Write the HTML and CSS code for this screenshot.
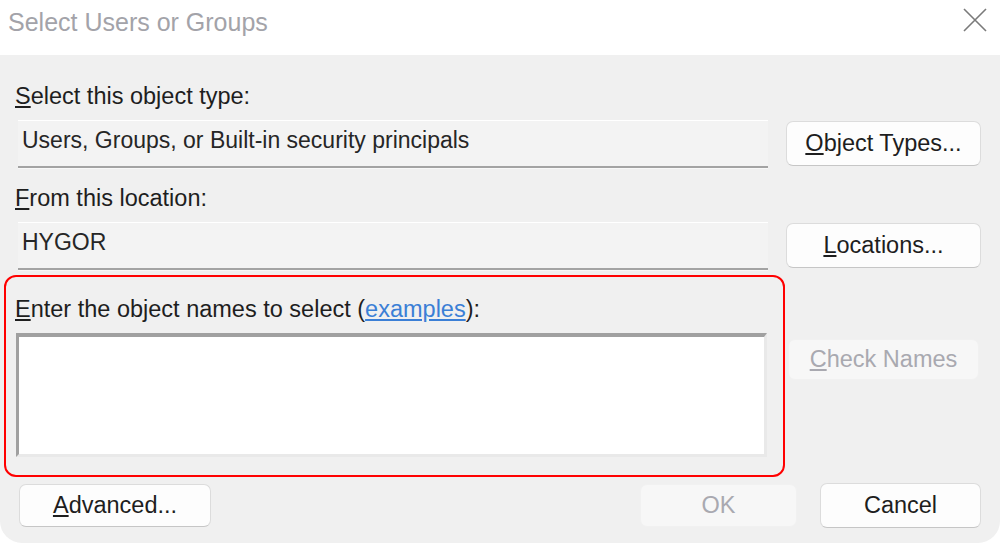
FILE: index.html
```html
<!DOCTYPE html>
<html lang="en">
  <head>
    <meta charset="UTF-8" />
    <title>Select Users or Groups</title>
    <link rel="stylesheet" href="styles.css">
  </head>
  <body>
    <div class="dialog">
      <!-- title bar -->
      <div class="titlebar">
        <span class="title">Select Users or Groups</span>
        <svg class="close" width="24" height="24" viewBox="0 0 24 24">
          <path d="M1 1 L23 23 M23 1 L1 23" stroke="#7a7a7a" stroke-width="1.6" fill="none" />
        </svg>
      </div>

      <div class="content">
        <div class="grid">
          <label class="label row-label1"><u>S</u>elect this object type:</label>
          <div class="field">Users, Groups, or Built-in security principals</div>
          <button class="btn"><u>O</u>bject Types...</button>

          <label class="label row-label2"><u>F</u>rom this location:</label>
          <div class="field">HYGOR</div>
          <button class="btn"><u>L</u>ocations...</button>

          <div class="highlight">
            <label class="label"><u>E</u>nter the object names to select (<a href="#">examples</a>):</label>
            <div class="names"></div>
          </div>
          <button class="btn btn-check" disabled><u>C</u>heck Names</button>
        </div>

        <div class="footer">
          <button class="btn btn-advanced"><u>A</u>dvanced...</button>
          <div class="footer-right">
            <button class="btn btn-ok" disabled>OK</button>
            <button class="btn btn-cancel">Cancel</button>
          </div>
        </div>
      </div>
    </div>
  </body>
</html>
```

FILE: styles.css
```css
body {
  margin: 0;
  background-color: #ffffff;
  font-family: "Liberation Sans", Arial, sans-serif;
  color: #1e1e1e;
}

.dialog {
  width: 1000px;
  height: 543px;
  display: flex;
  flex-direction: column;
}

.titlebar {
  height: 55px;
  flex: none;
  display: flex;
  align-items: flex-start;
  justify-content: space-between;
  padding: 0 13px 0 8px;
  box-sizing: border-box;
}

.title {
  font-size: 25px;
  color: #a3a3a9;
  margin-top: 8px;
}

.close {
  margin-top: 8px;
}

.content {
  flex: 1;
  background-color: #f0f0f0;
  border-radius: 0 0 22px 22px;
  padding: 0 19px 0 18px;
  display: flex;
  flex-direction: column;
}

.grid {
  display: grid;
  grid-template-columns: 750px 195px;
  column-gap: 18px;
  align-items: start;
}

.label {
  grid-column: 1 / 3;
  display: block;
  font-size: 23.5px;
  line-height: 24px;
  margin-left: -3px;
}

.row-label1 {
  margin-top: 29px;
  margin-bottom: 12px;
}

.row-label2 {
  margin-top: 18px;
  margin-bottom: 12px;
}

.label u {
  text-underline-offset: 2px;
}

.label a {
  color: #3b7fd6;
  text-decoration: underline;
}

.field {
  height: 48px;
  background-color: #f3f3f3;
  border-top: 1px solid #ffffff;
  border-bottom: 2px solid #a3a3a3;
  box-sizing: border-box;
  padding: 7px 4px 0;
  font-size: 23px;
  line-height: 24px;
  color: #262626;
  box-shadow: 0 1px 0 #f8f8f8;
}

.btn {
  height: 45px;
  font-family: inherit;
  font-size: 23.5px;
  color: #1e1e1e;
  background-color: #fdfdfd;
  border: 1px solid #dcdcdc;
  border-bottom-color: #c6c6c6;
  border-radius: 7px;
  padding: 0;
  margin-top: 1px;
}

.highlight {
  grid-column: 1;
  border: 2px solid #ff0000;
  border-radius: 12px;
  margin: 5px -17px 0 -14px;
  padding: 0 14px 18px 10px;
}

.highlight .label {
  margin-top: 20px;
  margin-left: -1px;
  margin-bottom: 12px;
}

.names {
  height: 124px;
  margin-right: 2px;
  background-color: #ffffff;
  border-top: 4px solid #a0a0a0;
  border-left: 3px solid #a0a0a0;
  border-right: 3px solid #e9e9e9;
  border-bottom: 3px solid #e9e9e9;
  box-sizing: border-box;
}

.btn-check {
  height: 41px;
  margin-top: 69px;
  margin-left: 2px;
  width: 191px;
  background-color: #f7f7f7;
  border-color: #f1f1f1;
  color: #a9a9b0;
}

.btn-check u {
  text-decoration-color: #a9a9b0;
}

.footer {
  display: flex;
  justify-content: space-between;
  align-items: center;
  margin-top: 5px;
}

.footer-right {
  display: flex;
  align-items: center;
  gap: 23px;
}

.btn-advanced {
  width: 192px;
  height: 43px;
  margin-left: 1px;
}

.btn-ok {
  width: 157px;
  height: 43px;
  background-color: #f7f7f7;
  border-color: #f1f1f1;
  color: #a9a9b0;
}

.btn-cancel {
  width: 161px;
  height: 45px;
}
```
